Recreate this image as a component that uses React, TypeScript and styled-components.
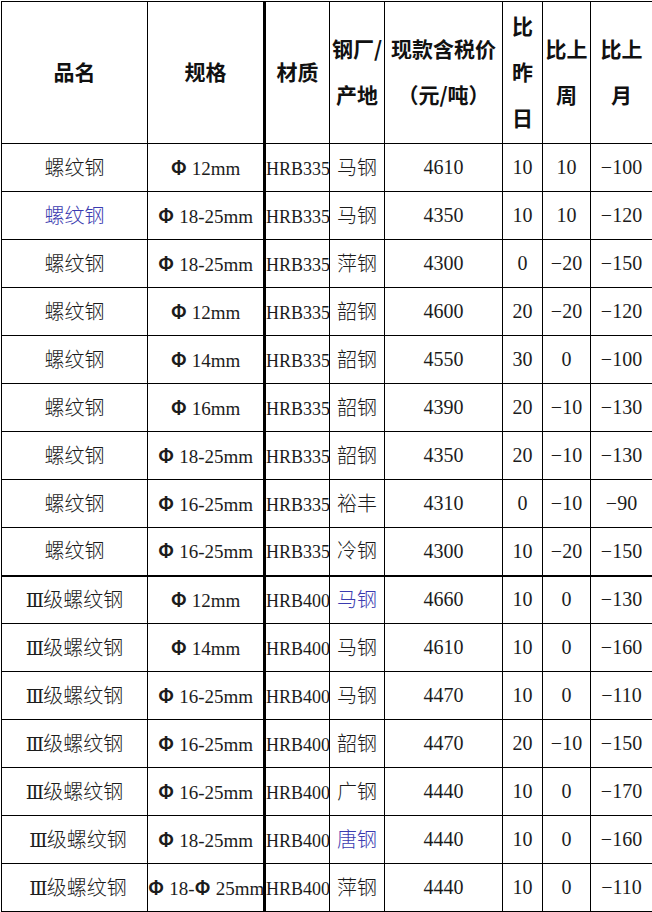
import styled, { createGlobalStyle } from "styled-components";

const GlobalStyle = createGlobalStyle`
    html, body {
        margin: 0;
        padding: 0;
        background: #ffffff;
    }
`

const Page = styled.div`
    padding: 1px 0 0 1px;
    width: 652px;
    overflow: hidden;
`

const PriceTable = styled.table`
    border-collapse: collapse;
    table-layout: fixed;
    width: 651px;
    color: #1c1c1c;
    font-family: "Liberation Serif", "DejaVu Serif", "Noto Sans CJK SC", serif;
`

const HeadRow = styled.tr`
    height: 141px;
`

const Row = styled.tr<{ $split?: boolean }>`
    height: 48px;
    ${p => p.$split && `td { border-top: 2px solid #000; }`}
`

const HeadCell = styled.th<{ $thick?: boolean }>`
    border: 1px solid #000;
    ${p => p.$thick && `border-left: 3px solid #000;`}
    padding: 0 0 3px;
    font-family: "Noto Sans CJK SC", sans-serif;
    font-weight: 700;
    font-size: 21px;
    line-height: 46px;
    text-align: center;
    vertical-align: middle;
    white-space: nowrap;
    color: #111;
`

const Cell = styled.td<{ $thick?: boolean, $blue?: boolean, $small?: boolean, $shift?: boolean }>`
    border: 1px solid #000;
    ${p => p.$thick && `border-left: 3px solid #000;`}
    padding: ${p => p.$small ? "2px 0 0" : "0 0 1px"};
    padding-left: ${p => p.$shift ? "7px" : "0"};
    font-size: ${p => p.$small ? "18px" : "20px"};
    line-height: 1;
    text-align: center;
    vertical-align: middle;
    white-space: nowrap;
    overflow: visible;
    color: ${p => p.$blue ? "#3b3bb0" : "#1c1c1c"};
`

const CjkText = styled.span`
    font-family: "Noto Sans CJK SC", sans-serif;
    font-weight: 300;
    font-size: 20px;
`

const Numeral = styled.span`
    font-family: "DejaVu Serif", "Liberation Serif", serif;
    font-size: 19px;
    letter-spacing: -1px;
`

const Phi = styled.span`
    font-family: "Noto Sans CJK SC", sans-serif;
    font-weight: 700;
    font-size: 19px;
    margin-right: 5px;
`

const Spec = styled.span`
    font-size: 19px;
`

type Item = {
    name: string
    spec: string
    grade: string
    mill: string
    price: number
    day: string
    week: string
    month: string
    blueName?: boolean
    blueMill?: boolean
    shift?: boolean
}

const rows: Item[] = [
    {name: "螺纹钢", spec: "Φ12mm", grade: "HRB335", mill: "马钢", price: 4610, day: "10", week: "10", month: "−100"},
    {name: "螺纹钢", spec: "Φ18-25mm", grade: "HRB335", mill: "马钢", price: 4350, day: "10", week: "10", month: "−120", blueName: true},
    {name: "螺纹钢", spec: "Φ18-25mm", grade: "HRB335", mill: "萍钢", price: 4300, day: "0", week: "−20", month: "−150"},
    {name: "螺纹钢", spec: "Φ12mm", grade: "HRB335", mill: "韶钢", price: 4600, day: "20", week: "−20", month: "−120"},
    {name: "螺纹钢", spec: "Φ14mm", grade: "HRB335", mill: "韶钢", price: 4550, day: "30", week: "0", month: "−100"},
    {name: "螺纹钢", spec: "Φ16mm", grade: "HRB335", mill: "韶钢", price: 4390, day: "20", week: "−10", month: "−130"},
    {name: "螺纹钢", spec: "Φ18-25mm", grade: "HRB335", mill: "韶钢", price: 4350, day: "20", week: "−10", month: "−130"},
    {name: "螺纹钢", spec: "Φ16-25mm", grade: "HRB335", mill: "裕丰", price: 4310, day: "0", week: "−10", month: "−90"},
    {name: "螺纹钢", spec: "Φ16-25mm", grade: "HRB335", mill: "冷钢", price: 4300, day: "10", week: "−20", month: "−150"},
    {name: "Ⅲ级螺纹钢", spec: "Φ12mm", grade: "HRB400", mill: "马钢", price: 4660, day: "10", week: "0", month: "−130", blueMill: true},
    {name: "Ⅲ级螺纹钢", spec: "Φ14mm", grade: "HRB400", mill: "马钢", price: 4610, day: "10", week: "0", month: "−160"},
    {name: "Ⅲ级螺纹钢", spec: "Φ16-25mm", grade: "HRB400", mill: "马钢", price: 4470, day: "10", week: "0", month: "−110"},
    {name: "Ⅲ级螺纹钢", spec: "Φ16-25mm", grade: "HRB400", mill: "韶钢", price: 4470, day: "20", week: "−10", month: "−150"},
    {name: "Ⅲ级螺纹钢", spec: "Φ16-25mm", grade: "HRB400", mill: "广钢", price: 4440, day: "10", week: "0", month: "−170"},
    {name: "Ⅲ级螺纹钢", spec: "Φ18-25mm", grade: "HRB400", mill: "唐钢", price: 4440, day: "10", week: "0", month: "−160", blueMill: true, shift: true},
    {name: "Ⅲ级螺纹钢", spec: "Φ18-Φ25mm", grade: "HRB400", mill: "萍钢", price: 4440, day: "10", week: "0", month: "−110", shift: true},
];

// split "Φ18-Φ25mm" into phi glyphs and the serif numbers
const renderSpec = (spec: string) =>
    spec.split("Φ").filter(Boolean).map((part, i) => (
        <span key={i}><Phi>Φ</Phi><Spec>{part}</Spec></span>
    ));

// the roman "Ⅲ" prefix is drawn in a serif face, the rest in the CJK face
const renderName = (name: string) =>
    name.startsWith("Ⅲ")
        ? <><Numeral>Ⅲ</Numeral><CjkText>{name.slice(1)}</CjkText></>
        : <CjkText>{name}</CjkText>;

const App = () => {
    return (
        <Page>
            <GlobalStyle/>
            <PriceTable>
                <colgroup>
                    <col style={{width: 146}}/>
                    <col style={{width: 117}}/>
                    <col style={{width: 65}}/>
                    <col style={{width: 55}}/>
                    <col style={{width: 118}}/>
                    <col style={{width: 40}}/>
                    <col style={{width: 48}}/>
                    <col style={{width: 62}}/>
                </colgroup>
                <thead>
                <HeadRow>
                    <HeadCell>品名</HeadCell>
                    <HeadCell>规格</HeadCell>
                    <HeadCell $thick>材质</HeadCell>
                    <HeadCell>钢厂/<br/>产地</HeadCell>
                    <HeadCell>现款含税价<br/>（元/吨）</HeadCell>
                    <HeadCell>比<br/>昨<br/>日</HeadCell>
                    <HeadCell>比上<br/>周</HeadCell>
                    <HeadCell>比上<br/>月</HeadCell>
                </HeadRow>
                </thead>
                <tbody>
                {rows.map((r, i) => (
                    <Row key={i} $split={i === 9}>
                        <Cell $blue={r.blueName} $shift={r.shift}>{renderName(r.name)}</Cell>
                        <Cell>{renderSpec(r.spec)}</Cell>
                        <Cell $thick $small>{r.grade}</Cell>
                        <Cell $blue={r.blueMill}><CjkText>{r.mill}</CjkText></Cell>
                        <Cell>{r.price}</Cell>
                        <Cell>{r.day}</Cell>
                        <Cell>{r.week}</Cell>
                        <Cell>{r.month}</Cell>
                    </Row>
                ))}
                </tbody>
            </PriceTable>
        </Page>
    );
};

export default App;
